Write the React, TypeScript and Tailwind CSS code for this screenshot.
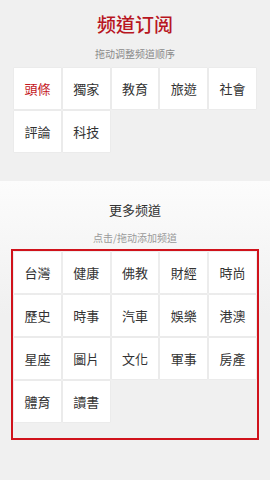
import React from "react";

const myChannels = ["頭條", "獨家", "教育", "旅遊", "社會", "評論", "科技"];

const moreChannels = [
  "台灣", "健康", "佛教", "財經", "時尚",
  "歷史", "時事", "汽車", "娛樂", "港澳",
  "星座", "圖片", "文化", "軍事", "房產",
  "體育", "讀書",
];

const font = { fontFamily: '"Noto Sans CJK TC", "Noto Sans CJK SC", sans-serif' };

function Tile({ label, active }: { label: string; active?: boolean }) {
  return (
    <div
      className={`h-[41px] flex items-center justify-center bg-white text-[13px] shadow-[0_0_0_0.5px_#e6e6e6] ${
        active ? "text-[#c3161d]" : "text-[#333333]"
      }`}
    >
      {label}
    </div>
  );
}

export default function App() {
  return (
    <div className="w-[270px] h-[480px] bg-[#f0f0f0] overflow-hidden" style={font}>
      {/* Subscribed */}
      <div className="h-[181px] pt-[10px]">
        <h1 className="text-center text-[19px] leading-[28px] font-medium text-[#b8161f]">
          频道订阅
        </h1>
        <p className="mt-[8px] text-center text-[10px] leading-[16px] text-[#8a8a8a]">
          拖动调整频道顺序
        </p>
        <div className="mt-[6px] mx-[14px] grid grid-cols-5 gap-[2px]">
          {myChannels.map((c, i) => (
            <Tile key={c} label={c} active={i === 0} />
          ))}
        </div>
      </div>

      {/* More channels */}
      <div className="h-[299px] bg-gradient-to-b from-[#fcfcfc] to-[#f0f0f0] to-[45%] pt-[19px]">
        <h2 className="text-center text-[13px] leading-[20px] text-[#333333]">更多频道</h2>
        <p className="mt-[10px] text-center text-[10px] leading-[16px] text-[#9a9a9a]">
          点击/拖动添加频道
        </p>
        <div className="mt-[3px] mx-[11px] border-2 border-[#d0121b] pt-[1px] px-[1px] pb-[16px]">
          <div className="grid grid-cols-5 gap-[2px]">
            {moreChannels.map((c) => (
              <Tile key={c} label={c} />
            ))}
          </div>
        </div>
      </div>
    </div>
  );
}
